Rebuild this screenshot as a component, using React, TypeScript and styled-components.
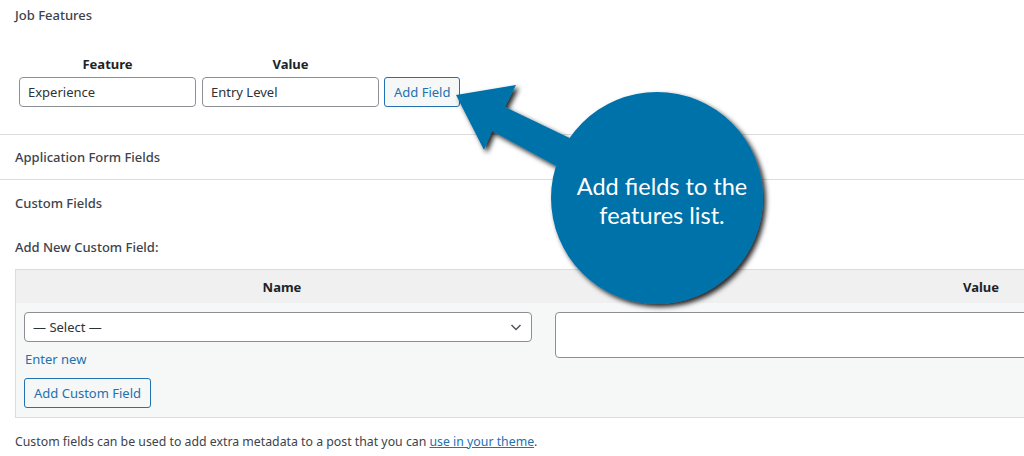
import React from "react";
import styled, { createGlobalStyle } from "styled-components";

const GlobalStyle = createGlobalStyle`
  html, body { margin: 0; padding: 0; background: #fff; }
  body { overflow: hidden; font-family: "Noto Sans", "Open Sans", sans-serif; color: #3c434a; }
  * { box-sizing: border-box; }
`;

const Page = styled.div`
  position: relative;
  width: 1024px;
  height: 456px;
  overflow: hidden;
  background: #fff;
`;

const Section = styled.section<{ $h?: number; $border?: boolean }>`
  height: ${(p) => (p.$h ? `${p.$h}px` : "auto")};
  border-bottom: ${(p) => (p.$border ? "1px solid #dcdcde" : "none")};
  padding: 0 15px;
`;

const Title = styled.h2<{ $top: number }>`
  margin: 0;
  padding-top: ${(p) => p.$top}px;
  font-size: 13px;
  line-height: 18px;
  font-weight: 500;
  color: #3c434a;
`;

const FeatureGrid = styled.div`
  display: grid;
  grid-template-columns: 177px 177px auto;
  column-gap: 6px;
  row-gap: 4px;
  margin: 31px 0 0 4px;
  align-items: center;
  justify-content: start;
`;

const ColHead = styled.div`
  text-align: center;
  font-size: 13px;
  font-weight: 700;
  line-height: 18px;
  color: #1d2327;
`;

const TextBox = styled.div`
  height: 30px;
  border: 1px solid #8c8f94;
  border-radius: 4px;
  background: #fff;
  padding: 0 8px;
  font-size: 13px;
  line-height: 28px;
  color: #2c3338;
`;

const Button = styled.button<{ $ml?: number }>`
  height: 30px;
  margin-left: ${(p) => p.$ml ?? 0}px;
  padding: 0 9px;
  border: 1px solid #2271b1;
  border-radius: 3px;
  background: #f6f7f7;
  color: #2271b1;
  font-family: inherit;
  font-size: 13px;
  line-height: 28px;
  white-space: nowrap;
`;

const SubLabel = styled.div`
  margin-top: 26px;
  font-size: 13px;
  font-weight: 500;
  line-height: 18px;
  color: #3c434a;
`;

const MetaTable = styled.div`
  margin-top: 13px;
  width: 1400px;
  border: 1px solid #dcdcde;
  background: #f6f7f7;
`;

const MetaHead = styled.div`
  display: grid;
  grid-template-columns: 532px 1fr;
  height: 33px;
  background: #f0f0f1;
  align-items: center;
`;

const MetaBody = styled.div`
  display: grid;
  grid-template-columns: 532px 1fr;
  padding: 9px 0 9px;
`;

const NameCell = styled.div`
  padding: 0 0 0 8px;
  display: flex;
  flex-direction: column;
  align-items: flex-start;
`;

const ValueCell = styled.div`
  padding: 0 0 0 7px;
`;

const SelectBox = styled.div`
  width: 508px;
  height: 30px;
  border: 1px solid #8c8f94;
  border-radius: 4px;
  background: #fff;
  padding: 0 8px;
  font-size: 13px;
  line-height: 28px;
  color: #2c3338;
  display: flex;
  align-items: center;
  justify-content: space-between;
`;

const TextArea = styled.div`
  height: 46px;
  border: 1px solid #8c8f94;
  border-radius: 4px;
  background: #fff;
`;

const Link = styled.a`
  color: #2271b1;
  font-size: 13px;
  line-height: 18px;
  text-decoration: none;
  margin: 8px 0 10px 1px;
`;

const FootNote = styled.p`
  margin: 15px 0 0;
  font-size: 12.3px;
  line-height: 18px;
  color: #3c434a;
  a { color: #2271b1; text-decoration: underline; }
`;

const Overlay = styled.svg`
  position: absolute;
  left: 0;
  top: 0;
  pointer-events: none;
`;

const BubbleText = styled.div`
  position: absolute;
  left: 557px;
  top: 172px;
  width: 210px;
  text-align: center;
  color: #fff;
  font-family: "Lato", "Open Sans", sans-serif;
  font-size: 23.5px;
  line-height: 29px;
`;

export default function App() {
  return (
    <Page>
      <GlobalStyle />
      <Section $h={135} $border>
        <Title $top={6}>Job Features</Title>
        <FeatureGrid>
          <ColHead>Feature</ColHead>
          <ColHead>Value</ColHead>
          <span />
          <TextBox>Experience</TextBox>
          <TextBox>Entry Level</TextBox>
          <Button $ml={-1}>Add Field</Button>
        </FeatureGrid>
      </Section>
      <Section $h={45} $border>
        <Title $top={13}>Application Form Fields</Title>
      </Section>
      <Section>
        <Title $top={14}>Custom Fields</Title>
        <SubLabel>Add New Custom Field:</SubLabel>
        <MetaTable>
          <MetaHead>
            <ColHead>Name</ColHead>
            <ColHead>Value</ColHead>
          </MetaHead>
          <MetaBody>
            <NameCell>
              <SelectBox>
                <span>— Select —</span>
                <svg width="14" height="14" viewBox="0 0 14 14">
                  <path d="M2.5 5 L7 9.5 L11.5 5" fill="none" stroke="#50575e" strokeWidth="1.5" />
                </svg>
              </SelectBox>
              <Link href="#">Enter new</Link>
              <Button>Add Custom Field</Button>
            </NameCell>
            <ValueCell>
              <TextArea />
            </ValueCell>
          </MetaBody>
        </MetaTable>
        <FootNote>
          Custom fields can be used to add extra metadata to a post that you can <a href="#">use in your theme</a>.
        </FootNote>
      </Section>

      <Overlay width="1024" height="456" viewBox="0 0 1024 456">
        <defs>
          <filter id="sh" x="-20%" y="-20%" width="140%" height="140%">
            <feDropShadow dx="3" dy="3" stdDeviation="2.5" floodColor="#000" floodOpacity="0.85" />
          </filter>
        </defs>
        <g filter="url(#sh)" fill="#0072aa">
          <polygon points="456,95 516,85 505,107 580,143 560,168 492,131 484,150" />
          <circle cx="657" cy="198" r="106" />
        </g>
      </Overlay>
      <BubbleText>
        Add fields to the
        <br />
        features list.
      </BubbleText>
    </Page>
  );
}
